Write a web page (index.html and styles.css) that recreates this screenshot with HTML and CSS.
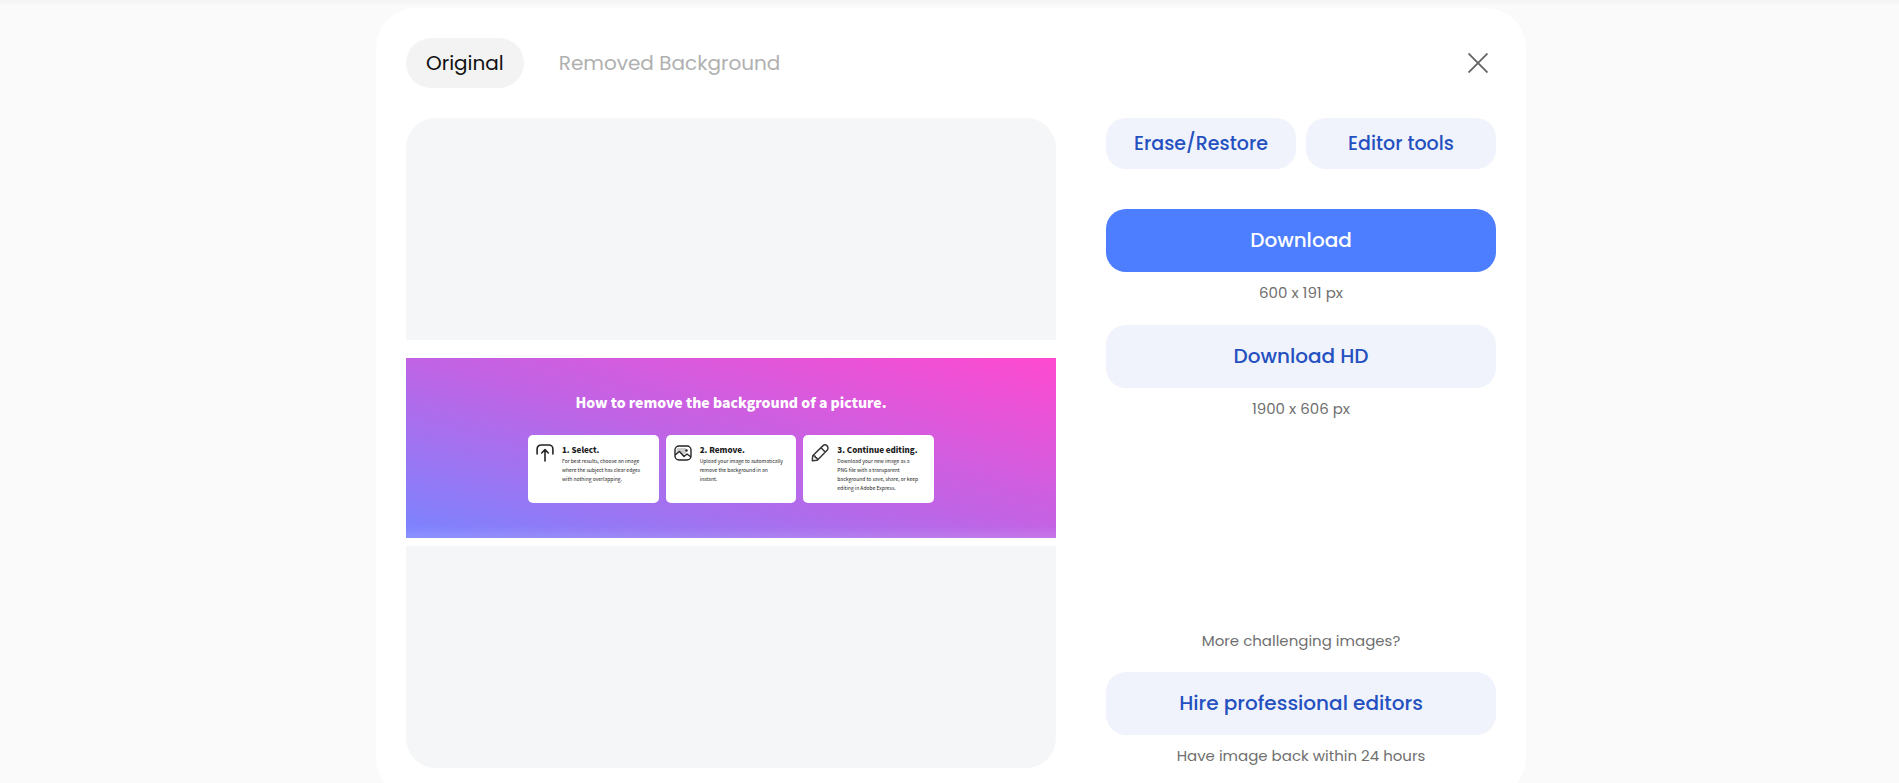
FILE: index.html
```html
<!DOCTYPE html>
<html lang="en">
<head>
<meta charset="utf-8">
<meta name="viewport" content="width=device-width, initial-scale=1">
<title>Remove Background</title>
<link rel="stylesheet" href="styles.css">
</head>
<body>
<main class="page">
  <section class="card">
    <header class="card-head">
      <nav class="tabs">
        <button class="tab tab-active" type="button">Original</button>
        <button class="tab" type="button">Removed Background</button>
      </nav>
      <button class="close" type="button" aria-label="Close">
        <svg width="20" height="20" viewBox="0 0 20 20" fill="none" stroke="currentColor" stroke-width="1.9"><path d="M.5.5l19 19M19.5.5l-19 19"/></svg>
      </button>
    </header>
    <div class="card-body">
      <div class="preview">
        <div class="picture">
          <div class="banner">
            <h2 class="banner-title">How to remove the background of a picture.</h2>
            <div class="steps">
              <article class="step">
                <svg class="step-icon" viewBox="0 0 18 18" fill="none" stroke="#252525" stroke-width="1.6" stroke-linecap="round" stroke-linejoin="round"><path d="M1.1 10V5a4 4 0 0 1 4-4h7.8a4 4 0 0 1 4 4v5M9 17V6M5.7 9L9 5.600l3.300 3.400"/></svg>
                <div>
                  <h3 class="step-title">1. Select.</h3>
                  <p class="step-text">For best results, choose an image<br>where the subject has clear edges<br>with nothing overlapping.</p>
                </div>
              </article>
              <article class="step">
                <svg class="step-icon" viewBox="0 0 18 18" fill="none" stroke="#252525" stroke-width="1.400" stroke-linejoin="round"><path d="M3 4h9v5L9 11 6 7 2 11z" fill="#ccc" stroke="none"/><rect x="1" y="2" width="16" height="14" rx="4"/><path d="M1 11l4.500-3.500 4.500 5 3-2.500 4 3"/><circle cx="12.500" cy="6.500" r="1.200" fill="#252525" stroke="none"/></svg>
                <div>
                  <h3 class="step-title">2. Remove.</h3>
                  <p class="step-text">Upload your image to automatically<br>remove the background in an<br>instant.</p>
                </div>
              </article>
              <article class="step">
                <svg class="step-icon" viewBox="0 0 18 18" fill="none" stroke="#383838" stroke-width="1.500" stroke-linejoin="round"><path d="M1.300 16.700l.4-5L11.800 1.900a2.900 2.900 0 0 1 4.300 4.300L6.300 16.200zM10 3.800l4.200 4.200M1.700 11.700c2.300-.2 2.800.5 2.700 1.900 1.400 0 2.100.7 1.900 2.600"/></svg>
                <div>
                  <h3 class="step-title">3. Continue editing.</h3>
                  <p class="step-text">Download your new image as a<br>PNG file with a transparent<br>background to save, share, or keep<br>editing in Adobe Express.</p>
                </div>
              </article>
            </div>
          </div>
        </div>
      </div>
      <aside class="actions">
        <div class="tools">
          <button class="btn btn-small" type="button">Erase/Restore</button>
          <button class="btn btn-small" type="button">Editor tools</button>
        </div>
        <button class="btn btn-primary" type="button">Download</button>
        <p class="note">600 x 191 px</p>
        <button class="btn" type="button">Download HD</button>
        <p class="note">1900 x 606 px</p>
        <div class="hire">
          <p class="note">More challenging images?</p>
          <button class="btn" type="button">Hire professional editors</button>
          <p class="note">Have image back within 24 hours</p>
        </div>
      </aside>
    </div>
  </section>
</main>
</body>
</html>
```
FILE: styles.css
```css
* { box-sizing: border-box; }

body {
  margin: 0;
  background: #fafafa;
  font-family: Poppins, Inter, sans-serif;
}

h2, h3, p { margin: 0; }

button {
  border: 0;
  padding: 0;
  background: none;
  font: inherit;
  cursor: pointer;
}

.page {
  height: 100vh;
  overflow: hidden;
  padding: 8px 0 0 3px;
  background: linear-gradient(#f4f4f4, #fafafa 6px);
}

.card {
  max-width: 1150px;
  margin: 0 auto;
  padding: 30px;
  border-radius: 40px;
  background: #fff;
}

.card-head {
  display: flex;
  align-items: center;
  justify-content: space-between;
  margin-bottom: 30px;
}

.tabs { display: flex; gap: 15px; }

.tab {
  height: 50px;
  padding: 0 20px;
  border-radius: 25px;
  color: #b0b0b0;
  font-size: 20px;
}

.tab-active { background: #f3f3f3; color: #111; }

.close {
  display: flex;
  padding: 8px;
  color: #666;
}

.card-body {
  display: grid;
  grid-template-columns: 5fr 3fr;
  gap: 50px;
}

.preview {
  display: flex;
  align-items: center;
  aspect-ratio: 1;
  overflow: hidden;
  border-radius: 30px;
  background: #f4f6f8;
}

.picture {
  width: 100%;
  padding: 18px 0 8px;
  background: #fff;
}

.banner {
  display: flex;
  flex-direction: column;
  align-items: center;
  padding: 31px 0 35px;
  background:
    linear-gradient(to top, rgb(255 255 255 / 12%), transparent 12px),
    linear-gradient(to top right, #7a84ff, #c064e5 50%, #ff4ad0);
  font-family: "Noto Sans CJK SC", "Noto Sans", sans-serif;
}

.banner-title {
  margin-bottom: 20px;
  color: #fff;
  font-size: 14px;
  font-weight: 900;
  line-height: 26px;
}

.steps {
  display: grid;
  grid-template-columns: repeat(3, minmax(0, 1fr));
  gap: 7px;
  width: 406px;
  max-width: 100%;
}

.step {
  display: flex;
  gap: 8px;
  min-height: 68px;
  padding: 9px 0 9px 8px;
  border-radius: 5px;
  background: #fff;
  white-space: nowrap;
}

.step-icon { flex: none; width: 18px; height: 18px; }

.step-title {
  color: #1c1c1c;
  font-size: 8px;
  font-weight: 900;
  line-height: 12px;
}

.step-text {
  color: #222;
  font-size: 5px;
  line-height: 9px;
}

.actions { display: flex; flex-direction: column; }

.tools {
  display: grid;
  grid-template-columns: 1fr 1fr;
  gap: 10px;
  margin-bottom: 40px;
}

.btn {
  height: 63px;
  padding-bottom: 2px;
  border-radius: 20px;
  background: #f0f3fc;
  color: #2450c0;
  font-size: 20px;
  font-weight: 500;
}

.btn-small { height: 51px; padding-bottom: 0; font-size: 19px; }

.btn-primary { background: #4d7eff; color: #fff; }

.note {
  margin: 9px 0 20px;
  color: #6f6f6f;
  font-size: 15px;
  line-height: 24px;
  text-align: center;
}

.hire {
  display: flex;
  flex-direction: column;
  margin-top: auto;
}

.hire .note:first-child { margin-bottom: 19px; }

.hire .note:last-child { margin-bottom: 0; }
```
